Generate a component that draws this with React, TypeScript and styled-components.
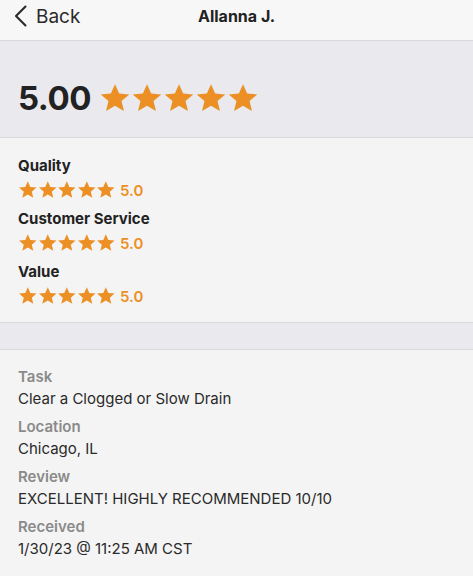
import React from 'react';
import styled, { createGlobalStyle } from 'styled-components';

const ORANGE = '#ec8f24';

const GlobalStyle = createGlobalStyle`
  html, body {
    margin: 0;
    padding: 0;
    background: #f4f4f4;
  }
  body {
    font-family: Inter, "Noto Sans", "Liberation Sans", sans-serif;
    color: #2a2a2a;
  }
`;

const Page = styled.div`
  width: 473px;
  min-height: 576px;
  background: #f4f4f4;
`;

const Header = styled.header`
  position: relative;
  height: 40px;
  display: flex;
  align-items: center;
  justify-content: center;
  background: #f7f7f7;
  border-bottom: 1px solid #d9d9dc;
`;

const BackButton = styled.button`
  position: absolute;
  left: 13px;
  top: 0;
  height: 32px;
  display: flex;
  align-items: center;
  gap: 8px;
  padding: 0;
  border: none;
  background: transparent;
  font-family: inherit;
  font-size: 19px;
  color: #2a2a2a;
  cursor: pointer;
`;

const Title = styled.h1`
  margin: 0 0 8px;
  font-size: 16px;
  font-weight: 700;
  color: #222;
`;

const Summary = styled.section`
  height: 97px;
  display: flex;
  align-items: center;
  gap: 8px;
  padding: 18px 18px 0;
  box-sizing: border-box;
  background: #e9e9ee;
  border-bottom: 1px solid #d9d9dc;
`;

const Score = styled.span`
  font-size: 33px;
  font-weight: 700;
  color: #222;
  letter-spacing: -0.5px;
`;

const Stars = styled.span<{ $size: number; $gap: number }>`
  display: inline-flex;
  gap: ${(p) => p.$gap}px;
  line-height: 0;
  svg {
    width: ${(p) => p.$size}px;
    height: ${(p) => p.$size}px;
  }
`;

const Ratings = styled.section`
  display: flex;
  flex-direction: column;
  gap: 5px;
  padding: 16px 18px 14px;
  background: #f4f4f4;
  border-bottom: 1px solid #d9d9dc;
`;

const RatingGroup = styled.div`
  display: flex;
  flex-direction: column;
`;

const RatingLabel = styled.div`
  font-size: 15px;
  font-weight: 700;
  line-height: 24px;
  color: #222;
`;

const RatingRow = styled.div`
  display: flex;
  align-items: center;
  gap: 4px;
  height: 24px;
`;

const RatingValue = styled.span`
  font-size: 15px;
  font-weight: 600;
  color: ${ORANGE};
`;

const Spacer = styled.div`
  height: 26px;
  background: #e9e9ee;
  border-bottom: 1px solid #d9d9dc;
`;

const Details = styled.section`
  display: flex;
  flex-direction: column;
  gap: 6px;
  padding: 16px 18px;
`;

const Field = styled.div`
  display: flex;
  flex-direction: column;
`;

const FieldLabel = styled.div`
  font-size: 15px;
  font-weight: 600;
  line-height: 22px;
  color: #8a8a8a;
`;

const FieldValue = styled.div`
  font-size: 15px;
  line-height: 22px;
  color: #2a2a2a;
`;

const Star = () => (
  <svg viewBox="0 0 24 24">
    <path
      fill={ORANGE}
      d="M12 1.6l3.1 7.1 7.6.6-5.8 5 1.8 7.5L12 17.8l-6.7 4 1.8-7.5-5.8-5 7.6-.6z"
    />
  </svg>
);

const StarRow = ({ size, gap }: { size: number; gap: number }) => (
  <Stars $size={size} $gap={gap}>
    {[0, 1, 2, 3, 4].map((i) => (
      <Star key={i} />
    ))}
  </Stars>
);

const ratings = ['Quality', 'Customer Service', 'Value'];

const details = [
  { label: 'Task', value: 'Clear a Clogged or Slow Drain' },
  { label: 'Location', value: 'Chicago, IL' },
  { label: 'Review', value: 'EXCELLENT! HIGHLY RECOMMENDED 10/10' },
  { label: 'Received', value: '1/30/23 @ 11:25 AM CST' },
];

export default function App() {
  return (
    <Page>
      <GlobalStyle />
      <Header>
        <BackButton>
          <svg width="15" height="24" viewBox="0 0 15 24">
            <path d="M12.5 2.5L3 12l9.5 9.5" fill="none" stroke="#2a2a2a" strokeWidth="2.1" strokeLinecap="round" strokeLinejoin="round" />
          </svg>
          Back
        </BackButton>
        <Title>Allanna J.</Title>
      </Header>
      <Summary>
        <Score>5.00</Score>
        <StarRow size={32} gap={-1} />
      </Summary>
      <Ratings>
        {ratings.map((r) => (
          <RatingGroup key={r}>
            <RatingLabel>{r}</RatingLabel>
            <RatingRow>
              <StarRow size={19.6} gap={0} />
              <RatingValue>5.0</RatingValue>
            </RatingRow>
          </RatingGroup>
        ))}
      </Ratings>
      <Spacer />
      <Details>
        {details.map((d) => (
          <Field key={d.label}>
            <FieldLabel>{d.label}</FieldLabel>
            <FieldValue>{d.value}</FieldValue>
          </Field>
        ))}
      </Details>
    </Page>
  );
}
